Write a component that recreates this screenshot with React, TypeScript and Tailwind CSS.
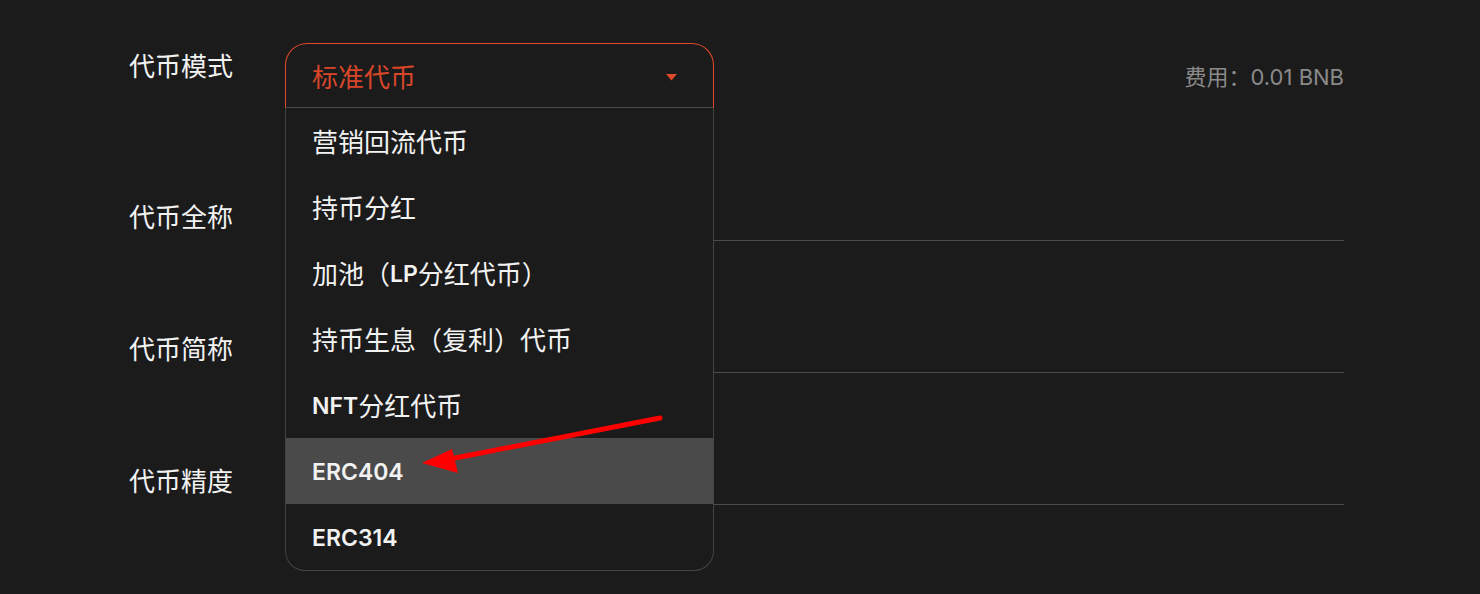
import React from 'react';

// latin parts are semibold and a bit smaller than the CJK around them
const options: { t: string; latin?: boolean }[][] = [
  [{ t: '营销回流代币' }],
  [{ t: '持币分红' }],
  [{ t: '加池（' }, { t: 'LP', latin: true }, { t: '分红代币）' }],
  [{ t: '持币生息（复利）代币' }],
  [{ t: 'NFT', latin: true }, { t: '分红代币' }],
  [{ t: 'ERC404', latin: true }],
  [{ t: 'ERC314', latin: true }],
];

const rows = ['代币全称', '代币简称', '代币精度'];

const font = { fontFamily: '"Inter", "Noto Sans CJK SC", sans-serif' };

export default function App() {
  return (
    <div className="relative w-[1480px] h-[594px] bg-[#1b1b1b] overflow-hidden text-[#f2f2f2]" style={font}>
      <div className="pl-[129px] pr-[136px] pt-[44px]">
        {/* token mode row */}
        <div className="flex items-start h-[65px]">
          <div className="w-[156px] pt-[6px] text-[26px] leading-[34px]">代币模式</div>
          <div className="relative w-[429px] h-[65px] z-10">
            <div className="absolute top-[-1px] left-0 w-full bg-[#1b1b1b]">
              <div className="flex items-center justify-between h-[65px] pl-[26px] pr-[36px] pt-[3px] border border-[#e0492a] border-b-[#4a4a4a] rounded-t-[22px]">
                <span className="text-[26px] text-[#d8462a]">标准代币</span>
                <svg width="11" height="7" viewBox="0 0 11 7">
                  <path d="M0 0 H11 L5.5 6.5 Z" fill="#e0492a" />
                </svg>
              </div>
              <div className="border-x border-b border-[#444444] rounded-b-[20px] overflow-hidden">
                {options.map((o, i) => (
                  <div
                    key={i}
                    className={
                      i === 5
                        ? 'h-[66px] flex items-center pl-[26px] pt-[3px] text-[26px] bg-[#4a4a4a]'
                        : 'h-[66px] flex items-center pl-[26px] pt-[3px] text-[26px]'
                    }
                  >
                    {o.map((p, j) =>
                      p.latin ? (
                        <span key={j} className="text-[23px] font-semibold">
                          {p.t}
                        </span>
                      ) : (
                        <span key={j}>{p.t}</span>
                      )
                    )}
                  </div>
                ))}
              </div>
            </div>
          </div>
          <div className="flex-1 flex justify-end pt-[17px] text-[22px] text-[#8a8a8a]">费用：0.01 BNB</div>
        </div>

        {rows.map((r) => (
          <div key={r} className="flex items-end h-[132px]">
            <div className="w-[156px] pb-[6px] text-[26px] leading-[34px]">{r}</div>
            <div className="flex-1 h-[64px] border-b border-[#4a4a4a]" />
          </div>
        ))}
      </div>

      {/* annotation arrow */}
      <svg className="absolute left-0 top-0 z-20 pointer-events-none" width="1480" height="594">
        <line x1="660" y1="418" x2="450" y2="459" stroke="#ff0000" strokeWidth="5" strokeLinecap="round" />
        <path d="M422 463 L452 449 L458 473 Z" fill="#ff0000" />
      </svg>
    </div>
  );
}
